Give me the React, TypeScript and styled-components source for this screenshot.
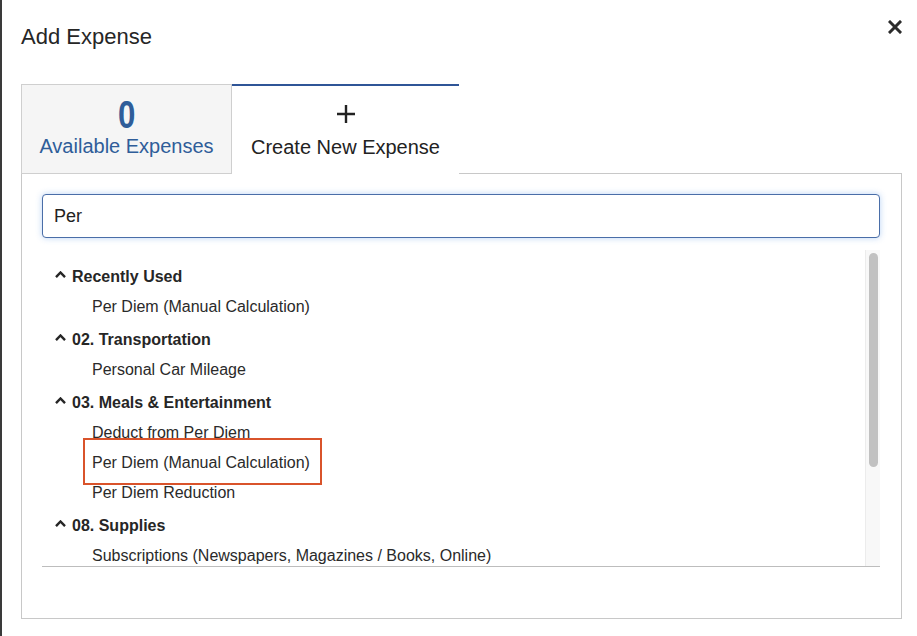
import styled, { createGlobalStyle } from 'styled-components';

const groups = [
    { title: 'Recently Used', items: ['Per Diem (Manual Calculation)'] },
    { title: '02. Transportation', items: ['Personal Car Mileage'] },
    {
        title: '03. Meals & Entertainment',
        items: ['Deduct from Per Diem', 'Per Diem (Manual Calculation)', 'Per Diem Reduction'],
        marked: 1,
    },
    { title: '08. Supplies', items: ['Subscriptions (Newspapers, Magazines / Books, Online)'] },
];

export default function App() {
    return (
        <>
            <GlobalStyle />
            <Modal>
                <Header>
                    <Title>Add Expense</Title>
                    <CloseButton aria-label="Close">
                        <svg width="14" height="14" viewBox="0 0 14 14">
                            <path d="M2 2L12 12M12 2L2 12" stroke="#2b2b2b" strokeWidth="3" strokeLinecap="square" />
                        </svg>
                    </CloseButton>
                </Header>

                <Tabs>
                    <Tab>
                        <Count>0</Count>
                        <TabLabel>Available Expenses</TabLabel>
                    </Tab>
                    <Tab $active>
                        <PlusIcon>
                            <svg width="18" height="18" viewBox="0 0 18 18">
                                <path d="M9 0V18M0 9H18" stroke="#222" strokeWidth="2.4" />
                            </svg>
                        </PlusIcon>
                        <TabLabel $active>Create New Expense</TabLabel>
                    </Tab>
                </Tabs>

                <Panel>
                    <SearchInput defaultValue="Per" autoFocus />
                    <ResultList>
                        <Results>
                            {groups.map((g) => (
                                <Group key={g.title}>
                                    <GroupHeader>
                                        <Caret>
                                            <svg width="11" height="7" viewBox="0 0 11 7">
                                                <path d="M1 6.2L5.5 1.5L10 6.2" fill="none" stroke="#262626" strokeWidth="2.4" />
                                            </svg>
                                        </Caret>
                                        {g.title}
                                    </GroupHeader>
                                    {g.items.map((item, i) => (
                                        <Item key={item + i} $marked={g.marked === i}>
                                            {item}
                                        </Item>
                                    ))}
                                </Group>
                            ))}
                        </Results>
                        <ScrollTrack>
                            <ScrollThumb />
                        </ScrollTrack>
                    </ResultList>
                </Panel>
            </Modal>
        </>
    );
}

const GlobalStyle = createGlobalStyle`
    html, body {
        margin: 0;
        padding: 0;
        background: #ffffff;
    }
    body {
        font-family: "Liberation Sans", Arial, sans-serif;
        color: #222;
    }
    * {
        box-sizing: border-box;
    }
`;

const Modal = styled.div`
    width: 917px;
    height: 636px;
    border-left: 2px solid #3a3a3a;
    padding: 0 15px 0 19px;
    overflow: hidden;
`;

const Header = styled.div`
    display: flex;
    align-items: flex-start;
    justify-content: space-between;
    padding-top: 26px;
    height: 84px;
`;

const Title = styled.h1`
    margin: 0;
    font-size: 22px;
    font-weight: 400;
    color: #262626;
    line-height: 22px;
`;

const CloseButton = styled.button`
    border: none;
    background: none;
    padding: 0;
    margin-top: -6px;
    cursor: pointer;
    display: flex;
`;

const Tabs = styled.div`
    display: flex;
    position: relative;
    z-index: 1;
    margin-bottom: -1px;
`;

const Tab = styled.div<{ $active?: boolean }>`
    width: ${({ $active }) => ($active ? '227px' : '211px')};
    height: 90px;
    display: flex;
    flex-direction: column;
    align-items: center;
    padding-top: 12px;
    background: ${({ $active }) => ($active ? '#ffffff' : '#f5f5f5')};
    border: ${({ $active }) => ($active ? 'none' : '1px solid #cfcfcf')};
    border-top: ${({ $active }) => ($active ? '2px solid #2f5597' : '1px solid #cfcfcf')};
`;

const Count = styled.div`
    font-size: 38px;
    font-weight: 700;
    line-height: 36px;
    color: #2f5d99;
    transform: scaleX(0.82);
`;

const PlusIcon = styled.div`
    height: 36px;
    display: flex;
    align-items: flex-start;
    padding-top: 7px;
`;

const TabLabel = styled.div<{ $active?: boolean }>`
    margin-top: 2px;
    font-size: 20px;
    line-height: 22px;
    color: ${({ $active }) => ($active ? '#222' : '#2f5d99')};
`;

const Panel = styled.div`
    width: 881px;
    height: 446px;
    border: 1px solid #c8c8c8;
    padding: 20px 21px 0 20px;
`;

const SearchInput = styled.input`
    display: block;
    width: 100%;
    height: 44px;
    border: 1px solid #4a6ea8;
    border-radius: 4px;
    padding: 0 11px;
    font-family: "Liberation Sans", Arial, sans-serif;
    font-size: 18px;
    color: #222;
    box-shadow: 0 0 6px rgba(102, 160, 233, 0.45);
    outline: none;
    caret-color: #222;
`;

const ResultList = styled.div`
    margin-top: 12px;
    height: 317px;
    display: flex;
    border-bottom: 1px solid #bdbdbd;
`;

const Results = styled.div`
    flex: 1;
    padding: 12px 0 0 13px;
    display: flex;
    flex-direction: column;
    gap: 3px;
`;

const Group = styled.div`
    display: flex;
    flex-direction: column;
`;

const GroupHeader = styled.div`
    height: 30px;
    display: flex;
    align-items: center;
    font-size: 16px;
    font-weight: 700;
    color: #262626;
`;

const Caret = styled.span`
    width: 17px;
    display: flex;
    align-items: center;
    margin-top: -5px;
`;

const Item = styled.div<{ $marked?: boolean }>`
    position: relative;
    height: 30px;
    display: flex;
    align-items: center;
    align-self: flex-start;
    padding-left: 37px;
    font-size: 16px;
    color: #2a2a2a;

    &::after {
        content: '';
        display: ${({ $marked }) => ($marked ? 'block' : 'none')};
        position: absolute;
        left: 28px;
        right: -12px;
        top: -10px;
        bottom: -7px;
        border: 2px solid #d9532b;
    }
`;

const ScrollTrack = styled.div`
    width: 15px;
    background: #f8f8f8;
    border-left: 1px solid #ececec;
    padding: 3px 2px 0 3px;
`;

const ScrollThumb = styled.div`
    height: 214px;
    background: #c1c1c1;
    border-radius: 5px;
`;
